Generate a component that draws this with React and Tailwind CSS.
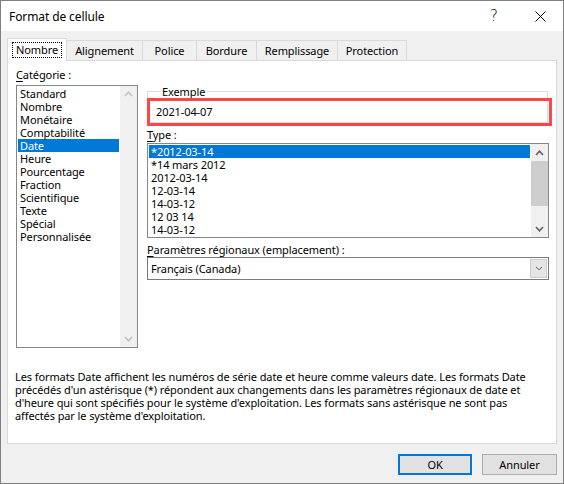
import React from "react";

function Chevron({ dir = "up", color = "#606060", w = 9, h = 6, sw = 1.6 }) {
  const d = dir === "up" ? `M1 ${h - 1} L${w / 2} 1.2 L${w - 1} ${h - 1}` : `M1 1 L${w / 2} ${h - 1.2} L${w - 1} 1`;
  return (
    <svg width={w} height={h} viewBox={`0 0 ${w} ${h}`}>
      <path d={d} stroke={color} strokeWidth={sw} fill="none" />
    </svg>
  );
}

const tabs = [
  { label: "Nombre", w: 60 },
  { label: "Alignement", w: 77 },
  { label: "Police", w: 55 },
  { label: "Bordure", w: 61 },
  { label: "Remplissage", w: 82 },
  { label: "Protection", w: 70 },
];

const categories = [
  "Standard",
  "Nombre",
  "Monétaire",
  "Comptabilité",
  "Date",
  "Heure",
  "Pourcentage",
  "Fraction",
  "Scientifique",
  "Texte",
  "Spécial",
  "Personnalisée",
];

const types = ["*2012-03-14", "*14 mars 2012", "2012-03-14", "12-03-14", "14-03-12", "12 03 14", "14-03-12"];

export default function App() {
  return (
    <div className="w-[564px] h-[484px] bg-[#f0f0f0] border border-[#7f7f7f] flex flex-col font-['Noto_Sans',sans-serif] text-[11px] leading-[13px] tracking-[-0.1px] text-black select-none">
      {/* Title bar */}
      <div className="h-[30px] bg-white flex items-center shrink-0">
        <span className="pl-[8px] text-[12px]">Format de cellule</span>
        <div className="ml-auto flex h-full">
          <div className="w-[46px] h-full flex items-center justify-center text-[15px] font-['DejaVu_Sans',sans-serif] font-light">?</div>
          <div className="w-[46px] h-full flex items-center justify-center">
            <svg width="11" height="11" viewBox="0 0 11 11">
              <path d="M0.5 0.5 L10.5 10.5 M10.5 0.5 L0.5 10.5" stroke="#000" strokeWidth="1" />
            </svg>
          </div>
        </div>
      </div>

      {/* Tabs */}
      <div className="px-[6px] pt-[7px] flex items-end h-[29px] shrink-0">
        {tabs.map((t, i) =>
          i === 0 ? (
            <div
              key={t.label}
              style={{ width: t.w }}
              className="h-[23px] -mb-px relative z-10 bg-white border-t border-l border-r border-[#d9d9d9] flex items-center justify-center"
            >
              <span className="border border-dotted border-black px-[3px] leading-[13px] pb-px">{t.label}</span>
            </div>
          ) : (
            <div
              key={t.label}
              style={{ width: t.w }}
              className="h-[20px] -ml-px bg-[#f0f0f0] border-t border-l border-r border-[#d9d9d9] flex items-center justify-center"
            >
              {t.label}
            </div>
          )
        )}
      </div>

      {/* Panel */}
      <div className="mx-[6px] h-[384px] bg-white border border-[#d9d9d9] flex flex-col shrink-0">
        <div className="flex pl-[8px]">
          {/* Left column */}
          <div className="flex flex-col pt-[7px] w-[122px]">
            <div className="h-[13px]">
              <span className="underline underline-offset-2">C</span>atégorie :
            </div>
            <div className="mt-[4px] h-[263px] border border-[#828790] flex">
              <div className="flex-1 p-px">
                {categories.map((c) => (
                  <div
                    key={c}
                    className={`h-[13px] pl-[2px] ${c === "Date" ? "bg-[#0078d7] text-white" : ""}`}
                  >
                    {c}
                  </div>
                ))}
              </div>
              <div className="w-[17px] bg-[#f0f0f0] flex flex-col justify-between items-center py-[5px]">
                <Chevron dir="up" color="#c2c2c2" />
                <Chevron dir="down" color="#c2c2c2" />
              </div>
            </div>
          </div>

          {/* Right column */}
          <div className="ml-[9px] w-[402px] flex flex-col">
            <div className="relative mt-[24px]">
              <fieldset className="border border-[#dcdcdc] w-[401px] pl-[8px] pt-[7px] pb-[4px]">
                <legend className="ml-[5px] px-[1px] leading-[13px]">Exemple</legend>
                <div className="h-[13px]">2021-04-07</div>
              </fieldset>
              <div className="absolute left-0 top-[13px] w-[405px] h-[28px] border-[3px] border-[#ff4545]" />
            </div>

            <div className="mt-[5px] h-[13px]">
              <span className="underline underline-offset-2">T</span>ype :
            </div>
            <div className="mt-[2px] h-[95px] border border-[#828790] flex">
              <div className="flex-1 p-px">
                {types.map((t, i) => (
                  <div key={i} className={`h-[13px] pl-[2px] ${i === 0 ? "bg-[#0078d7] text-white" : ""}`}>
                    {t}
                  </div>
                ))}
              </div>
              <div className="w-[17px] bg-[#f0f0f0] flex flex-col">
                <div className="h-[17px] flex items-center justify-center">
                  <Chevron dir="up" color="#606060" />
                </div>
                <div className="h-[45px] bg-[#cdcdcd]" />
                <div className="flex-1" />
                <div className="h-[17px] flex items-center justify-center">
                  <Chevron dir="down" color="#606060" />
                </div>
              </div>
            </div>

            <div className="mt-[5px] h-[13px]">
              <span className="underline underline-offset-2">P</span>aramètres régionaux (emplacement) :
            </div>
            <div className="mt-px h-[23px] border border-[#7a7a7a] flex bg-white">
              <div className="flex-1 flex items-center pl-[3px]">Français (Canada)</div>
              <div className="w-[17px] m-px bg-[#e5e5e5] border border-[#cccccc] flex items-center justify-center">
                <Chevron dir="down" color="#606060" w={8} h={5} sw={1} />
              </div>
            </div>
          </div>
        </div>

        <div className="mt-[22px] pl-[7px] leading-[13px]">
          Les formats Date affichent les numéros de série date et heure comme valeurs date. Les formats Date
          <br />
          précédés d'un astérisque (*) répondent aux changements dans les paramètres régionaux de date et
          <br />
          d'heure qui sont spécifiés pour le système d'exploitation. Les formats sans astérisque ne sont pas
          <br />
          affectés par le système d'exploitation.
        </div>
      </div>

      {/* Buttons */}
      <div className="flex justify-end gap-[10px] pr-[6px] mt-[10px]">
        <button className="w-[74px] h-[21px] bg-[#e1e1e1] border-2 border-[#0078d7] flex items-center justify-center leading-[13px]">
          OK
        </button>
        <button className="w-[75px] h-[21px] bg-[#e1e1e1] border border-[#adadad] flex items-center justify-center leading-[13px]">
          Annuler
        </button>
      </div>
    </div>
  );
}
